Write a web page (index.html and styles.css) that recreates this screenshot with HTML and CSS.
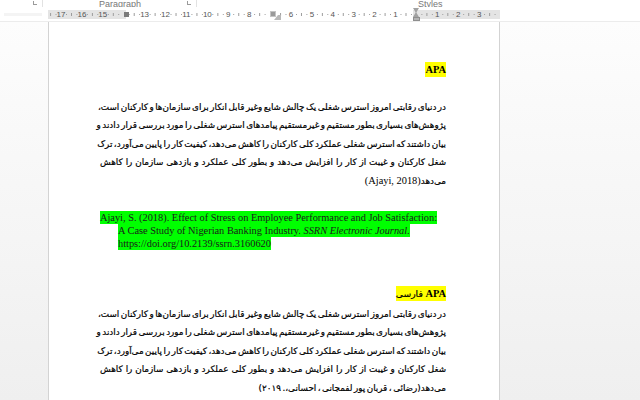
FILE: index.html
```html
<!DOCTYPE html>
<html lang="fa">
<head>
<meta charset="utf-8">
<link rel="stylesheet" href="styles.css">
</head>
<body>
<div class="ribbon">
  <div class="grp g1"><span class="launch"></span></div>
  <div class="grp g2"><span class="lbl lbl-para">Paragraph</span><span class="launch"></span></div>
  <div class="grp g3"><span class="lbl lbl-styles">Styles</span></div>
</div>
<div class="rulerrow">
  <div class="lefthint"></div>
  <div class="ruler">
    <div class="nums">
      <span>17</span><span>16</span><span>15</span><span></span><span>13</span><span>12</span><span>11</span><span>10</span><span>9</span><span>8</span><span></span><span>6</span><span>5</span><span>4</span><span>3</span><span>2</span><span>1</span><span></span><span>1</span><span>2</span><span>3</span>
    </div>
    <span class="mk mk-indent"></span>
    <span class="mk mk-tab"></span>
    <span class="mk mk-cursor"></span>
    <span class="mk mk-hour"><i class="tri-down"></i><i class="tri-up"></i><i class="box"></i></span>
  </div>
</div>
<div class="work">
  <div class="gutter gl"></div>
  <div class="page">
    <div class="heading h1"><span class="hl-y">APA</span></div>
    <div class="fa-par p1">
      <div class="ln">در دنیای رقابتی امروز استرس شغلی یک چالش شایع وغیر قابل انکار برای سازمان‌ها و کارکنان است،</div>
      <div class="ln">پژوهش‌های بسیاری بطور مستقیم و غیرمستقیم پیامدهای استرس شغلی را مورد بررسی قرار دادند و</div>
      <div class="ln">بیان داشتند که استرس شغلی عملکرد کلی کارکنان را کاهش می‌دهد، کیفیت کار را پایین می‌آورد، ترک</div>
      <div class="ln">شغل کارکنان و غیبت از کار را افزایش می‌دهد و بطور کلی عملکرد و بازدهی سازمان را کاهش</div>
      <div class="ln last">می‌دهد<span class="lat">(Ajayi, 2018)</span></div>
    </div>
    <div class="ref" dir="ltr"><span class="hl-g">Ajayi, S. (2018). Effect of Stress on Employee Performance and Job Satisfaction:<br>A Case Study of Nigerian Banking Industry. <em>SSRN Electronic Journal</em>.<br>https://doi.org/10.2139/ssrn.3160620</span></div>
    <div class="heading h2"><span class="hl-y"><span class="lat-b">APA</span> <span class="fa-b">فارسی</span></span></div>
    <div class="fa-par p2">
      <div class="ln">در دنیای رقابتی امروز استرس شغلی یک چالش شایع وغیر قابل انکار برای سازمان‌ها و کارکنان است،</div>
      <div class="ln">پژوهش‌های بسیاری بطور مستقیم و غیرمستقیم پیامدهای استرس شغلی را مورد بررسی قرار دادند و</div>
      <div class="ln">بیان داشتند که استرس شغلی عملکرد کلی کارکنان را کاهش می‌دهد، کیفیت کار را پایین می‌آورد، ترک</div>
      <div class="ln">شغل کارکنان و غیبت از کار را افزایش می‌دهد و بطور کلی عملکرد و بازدهی سازمان را کاهش</div>
      <div class="ln last">می‌دهد(رضائی ، قربان پور لفمجانی ، احسانی،. ۲۰۱۹)</div>
    </div>
  </div>
  <div class="gutter gr"></div>
</div>
</body>
</html>
```
FILE: styles.css
```css
html, body {
  margin: 0;
  padding: 0;
}
body {
  width: 640px;
  height: 400px;
  overflow: hidden;
  background: #ffffff;
  font-family: "Liberation Sans", Arial, sans-serif;
}

/* ribbon bottom strip */
.ribbon {
  display: flex;
  height: 7px;
  overflow: hidden;
  background: #ffffff;
}
.grp {
  position: relative;
  height: 7px;
  box-sizing: border-box;
}
.g1 { width: 43px; border-right: 1px solid #e2e2e2; }
.g2 { width: 154px; border-right: 1px solid #e2e2e2; }
.g3 { flex: 1; }
.lbl {
  position: absolute;
  bottom: -2px;
  font-size: 9px;
  line-height: 10px;
  color: #777;
  white-space: nowrap;
}
.lbl-para { left: 56px; }
.lbl-styles { left: 221px; }
.launch {
  position: absolute;
  top: 1px;
  right: 5px;
  width: 4px;
  height: 4px;
  border-left: 1px solid #9a9a9a;
  border-bottom: 1px solid #9a9a9a;
  box-sizing: border-box;
}

/* ruler */
.rulerrow {
  position: relative;
  height: 15px;
  border-bottom: 1px solid #ececec;
  box-sizing: border-box;
  padding: 3px 0 0 48px;
}
.lefthint {
  position: absolute;
  left: 4px;
  top: 6px;
  width: 38px;
  height: 3px;
  background: #f4f4f4;
}
.ruler {
  position: relative;
  width: 452px;
  height: 9px;
  background-image:
    linear-gradient(90deg, #9c9c9c 0 1px, transparent 1px),
    linear-gradient(90deg, #9c9c9c 0 1px, transparent 1px),
    linear-gradient(90deg, #e4e4e4 0 78px, #ffffff 78px 365px, #e4e4e4 365px);
  background-size: 20.92px 3px, 10.46px 1px, 100% 100%;
  background-position: 23px 3px, 18px 4px, 0 0;
  background-repeat: repeat-x, repeat-x, no-repeat;
}
.nums {
  display: flex;
  padding-left: 2.54px;
  height: 9px;
}
.nums span {
  flex: 0 0 20.92px;
  text-align: center;
  font-size: 8px;
  line-height: 9px;
  color: #555;
}
.mk { position: absolute; display: block; }
.mk-indent {
  left: 76px;
  top: 2px;
  width: 5px;
  height: 5px;
  background: #7a7a7a;
}
.mk-tab {
  left: 222px;
  top: 1px;
  width: 6px;
  height: 6px;
  background: #9a9a9a;
  border: 1px solid #c4c4c4;
  box-sizing: border-box;
}
.mk-cursor {
  left: 226px;
  top: 5px;
  width: 0;
  height: 0;
  border-left: 4px solid transparent;
  border-right: 3px solid #b8b8b8;
  border-bottom: 5px solid #b8b8b8;
}
.mk-hour {
  left: 365px;
  top: -2px;
  width: 7px;
  height: 14px;
}
.mk-hour i { position: absolute; display: block; }
.tri-down {
  left: 0; top: 0;
  width: 0; height: 0;
  border-left: 3.5px solid transparent;
  border-right: 3.5px solid transparent;
  border-top: 5px solid #a2a2a2;
}
.tri-up {
  left: 0; top: 4px;
  width: 0; height: 0;
  border-left: 3.5px solid transparent;
  border-right: 3.5px solid transparent;
  border-bottom: 5px solid #a2a2a2;
}
.box {
  left: 0; top: 9px;
  width: 7px; height: 4px;
  background: #b4b4b4;
  border: 1px solid #8e8e8e;
  box-sizing: border-box;
}

/* workspace */
.work {
  display: flex;
  height: 378px;
}
.gutter {
  background: linear-gradient(180deg, #fdfdfd, #efefef);
}
.gl { flex: 0 0 48px; }
.gr { flex: 1; }
.page {
  flex: 0 0 452px;
  min-width: 0;
  box-sizing: border-box;
  border-left: 1px solid #d3d3d3;
  border-right: 1px solid #d3d3d3;
  background: #ffffff;
  padding: 41px 53px 0 51px;
  direction: rtl;
  color: #000;
}
.heading {
  font-family: "Liberation Serif", "Times New Roman", serif;
  font-weight: bold;
  font-size: 10.4px;
  line-height: 14px;
  text-align: right;
}
.hl-y {
  background: #ffff00;
  padding: 2px 0;
}
.h2 { margin-top: 37px; }
.fa-b {
  font-family: "DejaVu Sans", sans-serif;
  font-weight: normal;
  font-size: 9.2px;
  -webkit-text-stroke: 0.2px #000;
}
.fa-par {
  font-family: "DejaVu Sans", sans-serif;
  font-size: 8.8px;
  word-spacing: -1.3px;
  line-height: 18.4px;
  -webkit-text-stroke: 0.2px #000;
}
.p1 { margin-top: 21px; }
.p2 { margin-top: 4px; }
.ln {
  text-align: justify;
  text-align-last: justify;
  white-space: nowrap;
}
.ln.last { text-align-last: right; }
.lat {
  font-family: "Liberation Serif", "Times New Roman", serif;
  font-size: 10.4px;
  word-spacing: 0;
  -webkit-text-stroke: 0;
}
.ref {
  margin-top: 21px;
  padding-left: 18px;
  text-indent: -18px;
  text-align: left;
  font-family: "Liberation Serif", "Times New Roman", serif;
  font-size: 10.35px;
  line-height: 13px;
  color: #1a1a1a;
}
.hl-g {
  background: #00ff00;
  padding: 1px 0;
}
```
